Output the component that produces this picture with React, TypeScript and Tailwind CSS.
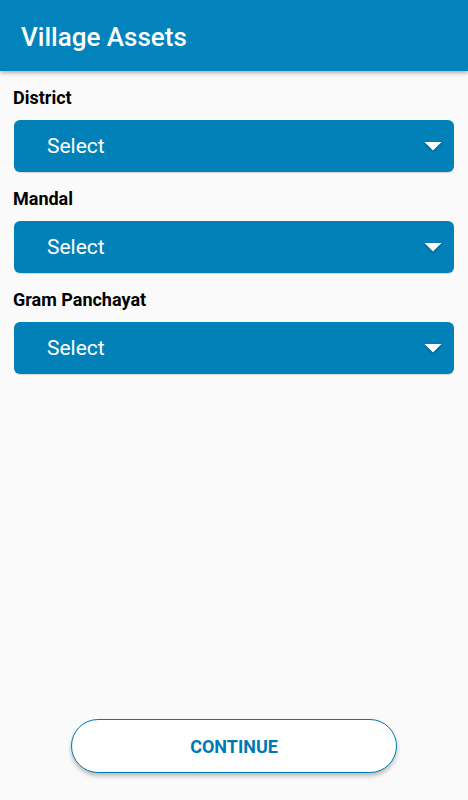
import React from "react";

const fields = ["District", "Mandal", "Gram Panchayat"];

const Dropdown: React.FC = () => (
  <div className="mt-[12px] flex h-[52px] items-center justify-between rounded-[6px] bg-[#0280b8] pl-[33px] pr-[12px] shadow-[0_1px_1px_rgba(0,0,0,0.15)]">
    <span className="text-[21px] leading-none text-white">Select</span>
    <svg width="18" height="11" viewBox="0 0 18 11" className="drop-shadow-[0_1px_1px_rgba(0,0,0,0.35)]">
      <path d="M0.5 1 L17.5 1 L9 9.5 Z" fill="#ffffff" />
    </svg>
  </div>
);

export default function App() {
  return (
    <div
      className="flex min-h-screen flex-col bg-[#fafafa]"
      style={{ fontFamily: "Roboto, 'Liberation Sans', sans-serif" }}
    >
      {/* Top bar */}
      <div className="flex h-[71px] items-center bg-[#0283bc] px-[21px] pt-[3px] shadow-[0_2px_4px_rgba(0,0,0,0.3)]">
        <h1 className="text-[26px] font-medium text-white">Village Assets</h1>
      </div>

      {/* Form */}
      <div className="px-[14px] pt-[16px]">
        {fields.map((label, i) => (
          <div key={label} className={i > 0 ? "mt-[16px]" : ""}>
            <div className="-ml-px text-[18px] font-bold leading-[21px] text-black">{label}</div>
            <Dropdown />
          </div>
        ))}
      </div>

      {/* Continue button */}
      <div className="mt-auto flex justify-center pb-[27px]">
        <button className="h-[54px] w-[326px] rounded-full border border-[#0079b2] bg-white text-[18px] font-bold text-[#0079b2] shadow-[0_3px_4px_rgba(0,0,0,0.25)]">
          CONTINUE
        </button>
      </div>
    </div>
  );
}
